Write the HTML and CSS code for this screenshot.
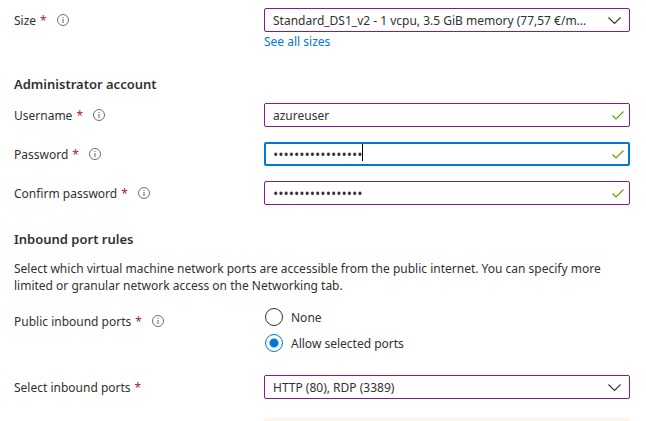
FILE: index.html
```
<!DOCTYPE html>
<html lang="en">
<head>
<meta charset="utf-8">
<title>Create a virtual machine</title>
<link rel="stylesheet" href="styles.css">
</head>
<body>
<svg class="defs" aria-hidden="true">
  <symbol id="info" viewBox="0 0 12 12">
    <circle cx="6" cy="6" r="5.5" fill="none" stroke="currentColor" stroke-width=".9"/>
    <path d="M5.5 3h1v1h-1zM5.5 5h1v4h-1z" fill="currentColor"/>
  </symbol>
  <symbol id="check" viewBox="0 0 12 9">
    <path d="M.5 4.5L4 8 11.5.5" fill="none" stroke="currentColor" stroke-width="1.1"/>
  </symbol>
  <symbol id="chevron" viewBox="0 0 13 8">
    <path d="M.5.5l6 6 6-6" fill="none" stroke="currentColor" stroke-width="1.1"/>
  </symbol>
</svg>
<form class="form">
  <div class="row">
    <div class="label"><label for="size">Size</label><span class="required">*</span><svg class="info"><use href="#info"/></svg></div>
    <div class="control">
      <div class="field">
        <select id="size" class="box"><option>Standard_DS1_v2 - 1 vcpu, 3.5 GiB memory (77,57 €/m...</option></select>
        <svg class="chevron"><use href="#chevron"/></svg>
      </div>
      <a class="link" href="#sizes">See all sizes</a>
    </div>
  </div>

  <h2 class="heading">Administrator account</h2>
  <div class="row">
    <div class="label"><label for="username">Username</label><span class="required">*</span><svg class="info"><use href="#info"/></svg></div>
    <div class="control field">
      <input id="username" class="box" type="text" value="azureuser">
      <svg class="check"><use href="#check"/></svg>
    </div>
  </div>
  <div class="row">
    <div class="label"><label for="password">Password</label><span class="required">*</span><svg class="info"><use href="#info"/></svg></div>
    <div class="control field">
      <input id="password" class="box secret active" type="password" value="aaaaaaaaaaaaaaaaa">
      <span class="caret"></span>
      <svg class="check"><use href="#check"/></svg>
    </div>
  </div>
  <div class="row">
    <div class="label"><label for="confirm">Confirm password</label><span class="required">*</span><svg class="info"><use href="#info"/></svg></div>
    <div class="control field">
      <input id="confirm" class="box secret" type="password" value="aaaaaaaaaaaaaaaaa">
      <svg class="check"><use href="#check"/></svg>
    </div>
  </div>

  <h2 class="heading">Inbound port rules</h2>
  <p class="text">Select which virtual machine network ports are accessible from the public internet. You can specify more limited or granular network access on the Networking tab.</p>
  <div class="row ports" role="radiogroup" aria-labelledby="ports-label">
    <div class="label"><span id="ports-label">Public inbound ports</span><span class="required">*</span><svg class="info"><use href="#info"/></svg></div>
    <div class="control choices">
      <label class="choice"><input class="radio" type="radio" name="ports">None</label>
      <label class="choice"><input class="radio" type="radio" name="ports" checked>Allow selected ports</label>
    </div>
  </div>
  <div class="row">
    <div class="label"><label for="inbound">Select inbound ports</label><span class="required">*</span></div>
    <div class="control field">
      <select id="inbound" class="box"><option>HTTP (80), RDP (3389)</option></select>
      <svg class="chevron"><use href="#chevron"/></svg>
    </div>
  </div>
  <div class="notice"></div>
</form>
</body>
</html>
```
FILE: styles.css
```
* {
  box-sizing: border-box;
}

body {
  margin: 0;
  background: #fff;
  color: #323130;
  font: 12px/17px "Noto Sans", sans-serif;
}

.defs {
  position: absolute;
  width: 0;
  height: 0;
}

.form {
  padding: 8px 16px 0 14px;
}

.row {
  display: grid;
  grid-template-columns: 250px 1fr;
  margin-bottom: 15px;
}

.label {
  display: flex;
  align-items: center;
  height: 24px;
}

.required {
  margin-left: 4px;
  color: #a4262c;
}

.info {
  width: 12px;
  height: 12px;
  margin-left: 10px;
  color: #605e5c;
}

.field {
  position: relative;
  height: 24px;
}

.box {
  display: block;
  width: 100%;
  height: 24px;
  margin: 0;
  padding: 0 30px 0 8px;
  border: 1px solid #881798;
  border-radius: 2px;
  outline: 0;
  appearance: none;
  background: #fff;
  color: inherit;
  font: inherit;
}

.secret {
  font-family: "Open Sans", sans-serif;
  font-size: 14px;
}

.active {
  padding-left: 7px;
  border: 2px solid #0078d4;
}

.caret {
  position: absolute;
  top: 2px;
  left: 98px;
  width: 1px;
  height: 17px;
  background: #000;
}

.check {
  position: absolute;
  top: 8px;
  right: 6px;
  width: 12px;
  height: 9px;
  color: #57a300;
  pointer-events: none;
}

.chevron {
  position: absolute;
  top: 9px;
  right: 9px;
  width: 13px;
  height: 8px;
  pointer-events: none;
}

.link {
  display: block;
  width: max-content;
  margin-top: 1px;
  color: #0078d4;
  text-decoration: none;
}

.heading {
  margin: 26px 0 10px;
  font-size: 13px;
  font-weight: 600;
  line-height: 17px;
}

.text {
  margin: 12px 0 14px;
}

.ports {
  margin-bottom: 23px;
}

.ports .label {
  height: 26px;
}

.choices {
  display: flex;
  flex-direction: column;
  gap: 8px;
}

.choice {
  display: flex;
  align-items: center;
  gap: 8px;
  height: 18px;
}

.radio {
  width: 18px;
  height: 18px;
  margin: 0 0 0 1px;
  border: 1px solid #323130;
  border-radius: 50%;
  appearance: none;
}

.radio:checked {
  border-color: #0078d4;
  background: radial-gradient(circle, #0078d4 4px, transparent 5px);
}

.notice {
  height: 3px;
  margin: 19px 0 0 250px;
  border-radius: 2px 2px 0 0;
  background: #fff4e8;
}
```
